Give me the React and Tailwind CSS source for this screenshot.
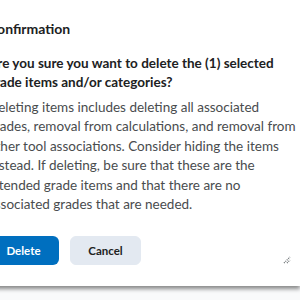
export default function App() {
  return (
    <div className="h-[300px] w-[300px] overflow-hidden bg-[#f9fafb]" style={{ fontFamily: 'Lato, "Noto Sans", sans-serif' }}>
      <div className="relative -ml-[12px] h-[286px] w-[312px] bg-white shadow-[0_3px_4px_rgba(0,0,0,0.45)]">
        <div className="pr-[1px] pt-[20px]">
          <h2 className="text-[14px] font-bold leading-[18px] text-[#202122]">Confirmation</h2>
          <p className="mt-[16px] text-[13.5px] font-bold leading-[19px] text-[#202122]">
            Are you sure you want to delete the (1) selected grade items and/or categories?
          </p>
          <p className="mt-[6px] text-[13.5px] leading-[19.4px] text-[#494c4e]">
            Deleting items includes deleting all associated grades, removal from calculations, and removal from other tool associations. Consider hiding the items instead. If deleting, be sure that these are the intended grade items and that there are no associated grades that are needed.
          </p>
        </div>
        <div className="mt-[22px] flex gap-[11px]">
          <button className="h-[29px] w-[71px] rounded-[6px] bg-[#006fbf] text-[11.5px] font-bold text-white">
            Delete
          </button>
          <button className="h-[29px] w-[71px] rounded-[6px] border border-[#e3e9f1] bg-[#e3e9f1] text-[11.5px] font-bold text-[#202122]">
            Cancel
          </button>
        </div>
        <svg className="absolute left-[295px] top-[256px]" width="8" height="8" viewBox="0 0 8 8">
          <path d="M1 7 L7 1 M4 7 L7 4" stroke="#6e7477" strokeWidth="1.3" strokeDasharray="1 1" />
        </svg>
      </div>
    </div>
  );
}
